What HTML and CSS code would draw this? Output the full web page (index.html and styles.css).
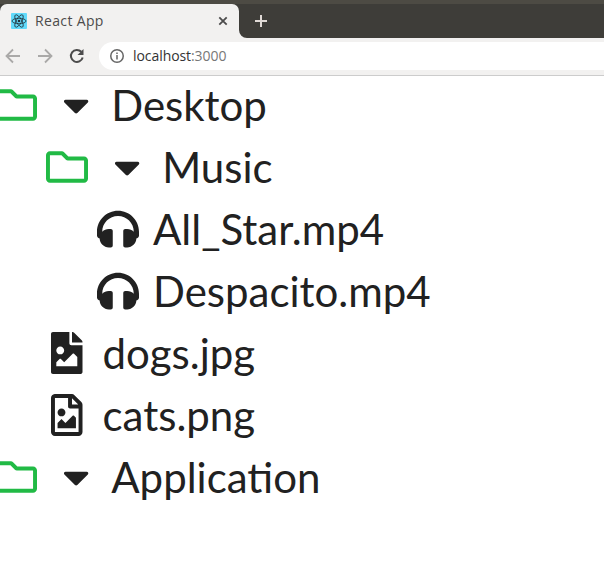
FILE: index.html
```html
<!DOCTYPE html>
<html lang="en">
<head>
<meta charset="utf-8">
<title>React App</title>
<link rel="stylesheet" href="styles.css">
</head>
<body>
<svg class="defs" aria-hidden="true">
  <symbol id="folder" viewBox="0 0 512 512"><path d="M464 128H272l-54.63-54.63c-6-6-14.14-9.37-22.63-9.37H48C21.49 64 0 85.49 0 112v288c0 26.51 21.49 48 48 48h416c26.51 0 48-21.49 48-48V176c0-26.51-21.49-48-48-48zm0 272H48V112h140.12l54.63 54.63c6 6 14.14 9.37 22.63 9.37H464v224z"/></symbol>
  <symbol id="caret" viewBox="0 0 320 512"><path d="M31.3 192h257.3c17.8 0 26.7 21.5 14.1 34.1L174.1 354.8c-7.8 7.8-20.5 7.8-28.3 0L17.2 226.1C4.6 213.5 13.5 192 31.3 192z"/></symbol>
  <symbol id="headphones" viewBox="0 0 512 512"><path d="M256 32C114.52 32 0 146.497 0 288v48a32 32 0 0 0 17.689 28.622l14.383 7.191C34.083 431.903 83.421 480 144 480h24c13.255 0 24-10.745 24-24V280c0-13.255-10.745-24-24-24h-24c-31.342 0-59.671 12.879-80 33.627V288c0-105.869 86.131-192 192-192s192 86.131 192 192v1.627C427.671 268.879 399.342 256 368 256h-24c-13.255 0-24 10.745-24 24v176c0 13.255 10.745 24 24 24h24c60.579 0 109.917-48.098 111.928-108.187l14.382-7.191A32 32 0 0 0 512 336v-48c0-141.479-114.496-256-256-256z"/></symbol>
</svg>
<header class="browser">
  <div class="tabstrip">
    <div class="tab">
      <svg class="favicon" viewBox="0 0 16 16"><rect width="16" height="16" rx="1" fill="#61dafb"/><g fill="none" stroke="#20313a" stroke-width=".8"><ellipse cx="8" cy="8" rx="7" ry="2.7"/><ellipse cx="8" cy="8" rx="7" ry="2.7" transform="rotate(60 8 8)"/><ellipse cx="8" cy="8" rx="7" ry="2.7" transform="rotate(120 8 8)"/></g><circle cx="8" cy="8" r="1.3" fill="#20313a"/></svg>
      <span class="tab-title">React App</span>
      <svg class="close" viewBox="0 0 10 10"><path d="M1.3 1.3l7.4 7.4M8.7 1.3L1.3 8.7"/></svg>
    </div>
    <svg class="curve" viewBox="0 0 8 8"><path d="M0 0a8 8 0 0 0 8 8H0z"/></svg>
    <svg class="plus" viewBox="0 0 12 12"><path d="M6 0v12M0 6h12"/></svg>
  </div>
  <div class="toolbar">
    <svg class="nav" viewBox="0 0 16 16"><path d="M15 8H2M8 1.5L1.5 8 8 14.5"/></svg>
    <svg class="nav" viewBox="0 0 16 16"><path d="M1 8h13M8 1.5L14.5 8 8 14.5"/></svg>
    <svg class="nav reload" viewBox="0 0 16 16"><path d="M13.7 9.5A6 6 0 1 1 12.3 3.8"/><path class="solid" d="M14.5 1v6h-6z"/></svg>
    <div class="address">
      <svg class="info" viewBox="0 0 14 14"><circle cx="7" cy="7" r="6.25"/><path d="M7 6v4.5M7 3.5v1.500"/></svg>
      <span class="url">localhost<span class="port">:3000</span></span>
    </div>
  </div>
</header>
<main class="tree">
  <div class="row folder-row"><svg class="icon green"><use href="#folder"/></svg><svg class="caret"><use href="#caret"/></svg><span>Desktop</span></div>
  <div class="row folder-row nested"><svg class="icon green"><use href="#folder"/></svg><svg class="caret"><use href="#caret"/></svg><span>Music</span></div>
  <div class="row audio"><svg class="icon"><use href="#headphones"/></svg><span>All_Star.mp4</span></div>
  <div class="row audio"><svg class="icon"><use href="#headphones"/></svg><span>Despacito.mp4</span></div>
  <div class="row image"><svg class="file" viewBox="0 0 384 512"><path d="M384 121.941V128H256V0h6.059c6.365 0 12.47 2.529 16.971 7.029l97.941 97.941A24.005 24.005 0 0 1 384 121.941zM248 160c-13.2 0-24-10.8-24-24V0H24C10.745 0 0 10.745 0 24v464c0 13.255 10.745 24 24 24h336c13.255 0 24-10.745 24-24V160H248zm-135.455 16c26.51 0 48 21.49 48 48s-21.49 48-48 48-48-21.49-48-48 21.491-48 48-48zm208 240h-256l.485-48.485L104.545 328c4.686-4.686 11.799-4.201 16.485.485L160.545 368 264.06 264.485c4.686-4.686 12.284-4.686 16.971 0L320.545 304v112z"/></svg><span>dogs.jpg</span></div>
  <div class="row image"><svg class="file" viewBox="0 0 384 512"><path d="M369.9 97.9L286 14C277 5 264.8-.1 252.1-.1H48C21.5 0 0 21.5 0 48v416c0 26.5 21.5 48 48 48h288c26.5 0 48-21.5 48-48V131.9c0-12.7-5.1-25-14.1-34zM332.1 128H256V51.9l76.1 76.1zM48 464V48h160v104c0 13.3 10.7 24 24 24h104v288H48zm32-48h224V288l-23.5-23.5c-4.7-4.7-12.3-4.7-17 0L176 352l-39.5-39.5c-4.7-4.7-12.3-4.7-17 0L80 352v64zm48-240c-26.5 0-48 21.5-48 48s21.5 48 48 48 48-21.5 48-48-21.5-48-48-48z"/></svg><span>cats.png</span></div>
  <div class="row folder-row"><svg class="icon green"><use href="#folder"/></svg><svg class="caret"><use href="#caret"/></svg><span>Application</span></div>
</main>
</body>
</html>
```
FILE: styles.css
```css
* { box-sizing: border-box; }
body { margin: 0; height: 570px; overflow: hidden; background: #fff; }
svg { display: block; flex: none; }
.defs { display: none; }

.browser { font-family: "Open Sans", sans-serif; font-size: 14px; color: #4c4c4c; }
.tabstrip { display: flex; height: 38px; border-top: 4px solid #4d4b44; background: #3e3d39; }
.tab { display: flex; align-items: center; width: 239px; padding: 0 11px; background: #f2f1f0; border-radius: 7px 7px 0 0; }
.favicon { width: 16px; height: 16px; margin-right: 8px; }
.tab-title { flex: 1; margin-top: -2px; letter-spacing: 0.35px; }
.close { width: 10px; height: 10px; stroke: #4c4c4c; stroke-width: 1.8; }
.curve { width: 8px; height: 8px; align-self: flex-end; fill: #f2f1f0; }
.plus { width: 12px; height: 12px; margin: 11px 0 0 8px; stroke: #e0dad6; stroke-width: 2; }

.toolbar { display: flex; align-items: center; height: 38px; padding: 0 0 1px 5px; background: #f2f1f0; border-bottom: 1px solid #ccc; }
.nav { width: 16px; height: 16px; margin-right: 16px; fill: none; stroke: #aaa9a8; stroke-width: 1.8; }
.reload { margin-right: 14px; stroke: #4c4c4c; stroke-width: 2; }
.solid { fill: #4c4c4c; stroke: none; }
.address { display: flex; flex: 1; align-items: center; height: 28px; padding-left: 11px; background: #fff; border-radius: 14px 0 0 14px; }
.info { width: 14px; height: 14px; margin-right: 9px; fill: none; stroke: #666; stroke-width: 1.5; }
.url { margin-top: -2px; color: #333; letter-spacing: -0.07px; }
.port { color: #777; }

.tree { margin-top: -2px; font-family: Lato, sans-serif; font-size: 42px; color: #212121; }
.row { display: flex; align-items: center; height: 62px; line-height: 62px; white-space: nowrap; }
.icon { width: 42px; height: 42px; fill: #212121; }
.green { fill: #21ba45; }
.caret { width: 26.25px; height: 42px; margin: 0 -2px 0 2px; fill: #212121; }
.file { width: 31.5px; height: 42px; fill: #212121; }
.folder-row { gap: 24px; margin-left: -5px; }
.nested { margin-left: 46px; }
.audio { gap: 14px; margin-left: 97px; }
.image { gap: 20px; margin-left: 51px; }
```
